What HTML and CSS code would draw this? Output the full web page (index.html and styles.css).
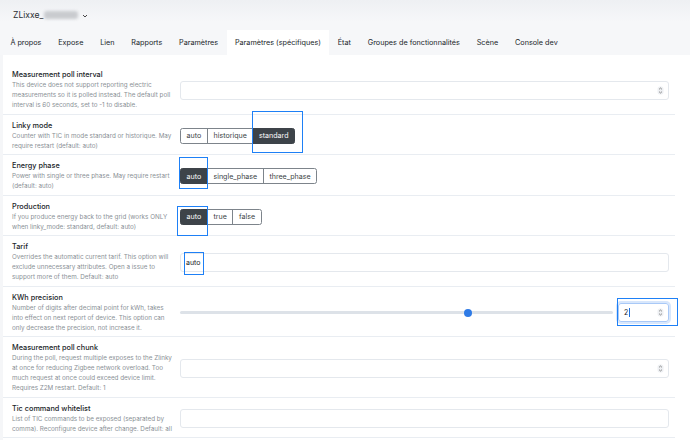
FILE: index.html
```html
<!DOCTYPE html>
<html lang="fr">
  <head>
    <meta charset="UTF-8" />
    <meta name="viewport" content="width=device-width, initial-scale=1.0" />
    <title>ZLixxe - Paramètres (spécifiques)</title>
    <link rel="stylesheet" href="styles.css">
  </head>
  <body>
    <header class="topbar">
      <div class="device">
        ZLixxe_<span class="blurred"></span>
        <svg class="caret" width="6" height="4" viewBox="0 0 6 4"><path d="M1 1l2 2 2-2" fill="none" stroke="#333" stroke-width="0.9"/></svg>
      </div>
      <nav class="tabs">
        <a class="tab">À propos</a>
        <a class="tab">Expose</a>
        <a class="tab">Lien</a>
        <a class="tab">Rapports</a>
        <a class="tab">Paramètres</a>
        <a class="tab active">Paramètres (spécifiques)</a>
        <a class="tab">État</a>
        <a class="tab">Groupes de fonctionnalités</a>
        <a class="tab">Scène</a>
        <a class="tab">Console dev</a>
      </nav>
    </header>

    <main class="card">
      <div class="setting">
        <div class="label">
          <div class="title">Measurement poll interval</div>
          <div class="desc">This device does not support reporting electric measurements so it is polled instead. The default poll interval is 60 seconds, set to -1 to disable.</div>
        </div>
        <div class="control">
          <div class="input"><span class="value"></span><svg class="spin" width="7" height="9" viewBox="0 0 7 9"><rect x="0.5" y="0.5" width="6" height="8" rx="2.5" fill="#eef0f3"/><path d="M2 3.4l1.5-1.4 1.5 1.4M2 5.6l1.5 1.4 1.5-1.4" fill="none" stroke="#666" stroke-width="0.7"/></svg></div>
        </div>
      </div>

      <div class="setting">
        <div class="label">
          <div class="title">Linky mode</div>
          <div class="desc">Counter with TIC in mode standard or historique. May require restart (default: auto)</div>
        </div>
        <div class="control">
          <div class="btn-group">
            <span class="btn">auto</span>
            <span class="btn">historique</span>
            <span class="btn selected">standard<span class="mark mark-linky"></span></span>
          </div>
        </div>
      </div>

      <div class="setting">
        <div class="label">
          <div class="title">Energy phase</div>
          <div class="desc">Power with single or three phase. May require restart (default: auto)</div>
        </div>
        <div class="control">
          <div class="btn-group">
            <span class="btn selected">auto<span class="mark mark-phase"></span></span>
            <span class="btn">single_phase</span>
            <span class="btn">three_phase</span>
          </div>
        </div>
      </div>

      <div class="setting">
        <div class="label">
          <div class="title">Production</div>
          <div class="desc">If you produce energy back to the grid (works ONLY when linky_mode: standard, default: auto)</div>
        </div>
        <div class="control">
          <div class="btn-group">
            <span class="btn selected">auto<span class="mark mark-prod"></span></span>
            <span class="btn">true</span>
            <span class="btn">false</span>
          </div>
        </div>
      </div>

      <div class="setting">
        <div class="label">
          <div class="title">Tarif</div>
          <div class="desc">Overrides the automatic current tarif. This option will exclude unnecessary attributes. Open a issue to support more of them. Default: auto</div>
        </div>
        <div class="control">
          <div class="input"><span class="value">auto<span class="mark mark-tarif"></span></span></div>
        </div>
      </div>

      <div class="setting">
        <div class="label">
          <div class="title">KWh precision</div>
          <div class="desc">Number of digits after decimal point for kWh, takes into effect on next report of device. This option can only decrease the precision, not increase it.</div>
        </div>
        <div class="control range-control">
          <div class="track"><span class="thumb" style="left: 66.4%"></span></div>
          <div class="input number focused">
            <span class="value">2<span class="cursor"></span></span>
            <svg class="spin" width="7" height="9" viewBox="0 0 7 9"><rect x="0.5" y="0.5" width="6" height="8" rx="2.5" fill="#eef0f3"/><path d="M2 3.4l1.5-1.4 1.5 1.4M2 5.6l1.5 1.4 1.5-1.4" fill="none" stroke="#666" stroke-width="0.7"/></svg>
            <span class="mark mark-kwh"></span>
          </div>
        </div>
      </div>

      <div class="setting">
        <div class="label">
          <div class="title">Measurement poll chunk</div>
          <div class="desc">During the poll, request multiple exposes to the Zlinky at once for reducing Zigbee network overload. Too much request at once could exceed device limit. Requires Z2M restart. Default: 1</div>
        </div>
        <div class="control">
          <div class="input"><span class="value"></span><svg class="spin" width="7" height="9" viewBox="0 0 7 9"><rect x="0.5" y="0.5" width="6" height="8" rx="2.5" fill="#eef0f3"/><path d="M2 3.4l1.5-1.4 1.5 1.4M2 5.6l1.5 1.4 1.5-1.4" fill="none" stroke="#666" stroke-width="0.7"/></svg></div>
        </div>
      </div>

      <div class="setting">
        <div class="label">
          <div class="title">Tic command whitelist</div>
          <div class="desc">List of TIC commands to be exposed (separated by comma). Reconfigure device after change. Default: all</div>
        </div>
        <div class="control">
          <div class="input"><span class="value"></span></div>
        </div>
      </div>
    </main>
  </body>
</html>
```

FILE: styles.css
```css
body {
  margin: 0;
  font-family: Inter, "Noto Sans", sans-serif;
  color: #212529;
  background: #f5f6f8;
  overflow: hidden;
}

.topbar {
  background: linear-gradient(#eef0f3, #f6f7f9 40%);
}

.device {
  display: flex;
  align-items: center;
  height: 30px;
  padding-left: 13px;
  font-size: 8.6px;
  color: #2b2f33;
}

.blurred {
  display: inline-block;
  width: 34px;
  height: 8px;
  margin-left: 1px;
  background: #c9cbcf;
  border-radius: 3px;
  filter: blur(1.6px);
}

.caret {
  margin-left: 4px;
  margin-top: 1px;
}

.tabs {
  display: flex;
  height: 25px;
  padding-left: 2px;
}

.tab {
  display: flex;
  align-items: center;
  padding: 0 8.4px;
  font-size: 7.25px;
  color: #212529;
}

.tab.active {
  background: #fff;
}

.card {
  background: #fff;
  margin-left: 3px;
  padding-top: 9px;
  height: 376px;
}

.setting {
  display: flex;
  align-items: center;
  margin-right: 15px;
  padding: 6px 6px 3.5px 9px;
  border-bottom: 1px solid #e9edf2;
}

.label {
  width: 160px;
  flex-shrink: 0;
}

.title {
  font-size: 7.3px;
  font-weight: 500;
  line-height: 10px;
  color: #212529;
}

.desc {
  font-size: 6.3px;
  line-height: 10px;
  color: #8a9096;
}

.control {
  flex: 1;
  margin-left: 8px;
  display: flex;
  align-items: center;
}

.input {
  position: relative;
  flex: 1;
  display: flex;
  align-items: center;
  justify-content: space-between;
  height: 17px;
  padding: 0 4px 0 5px;
  border: 1px solid #e4e8ed;
  border-radius: 3px;
  font-size: 7px;
  color: #212529;
}

.value {
  position: relative;
}

.btn-group {
  display: flex;
}

.btn {
  position: relative;
  display: flex;
  align-items: center;
  height: 14px;
  padding: 0 5.6px;
  font-size: 7.1px;
  color: #3a3f44;
  border: 1px solid #7d848b;
  margin-left: -1px;
}

.btn:first-child {
  margin-left: 0;
  border-radius: 2.5px 0 0 2.5px;
}

.btn:last-child {
  border-radius: 0 2.5px 2.5px 0;
}

.btn.selected {
  background: #3d4349;
  border-color: #3d4349;
  color: #fff;
  z-index: 1;
}

.range-control {
  gap: 5px;
}

.track {
  position: relative;
  flex: 1;
  height: 3px;
  background: #dde2e8;
  border-radius: 2px;
}

.thumb {
  position: absolute;
  top: -2.5px;
  width: 8px;
  height: 8px;
  margin-left: -4px;
  background: #2f7be6;
  border-radius: 50%;
}

.input.number {
  flex: 0 0 auto;
  width: 40px;
  height: 17px;
  border-color: #a9c9f7;
  box-shadow: 0 0 0 2px #d8e7fc;
}

.cursor {
  position: absolute;
  top: 0;
  right: -1.5px;
  width: 1px;
  height: 9px;
  background: #1d6fe0;
}

.mark {
  position: absolute;
  border: 1.5px solid #1e80f6;
  pointer-events: none;
}

.mark-linky {
  top: -18px;
  left: -1px;
  right: -9px;
  bottom: -10px;
}

.mark-phase {
  top: -12px;
  left: -2px;
  right: -1px;
  bottom: -6px;
}

.mark-prod {
  top: -4px;
  left: -4px;
  right: -1px;
  bottom: -12px;
}

.mark-tarif {
  top: -6px;
  left: -2px;
  right: -3px;
  bottom: -8px;
}

.mark-kwh {
  top: -6px;
  left: -2px;
  right: -10px;
  bottom: -5px;
}
```
